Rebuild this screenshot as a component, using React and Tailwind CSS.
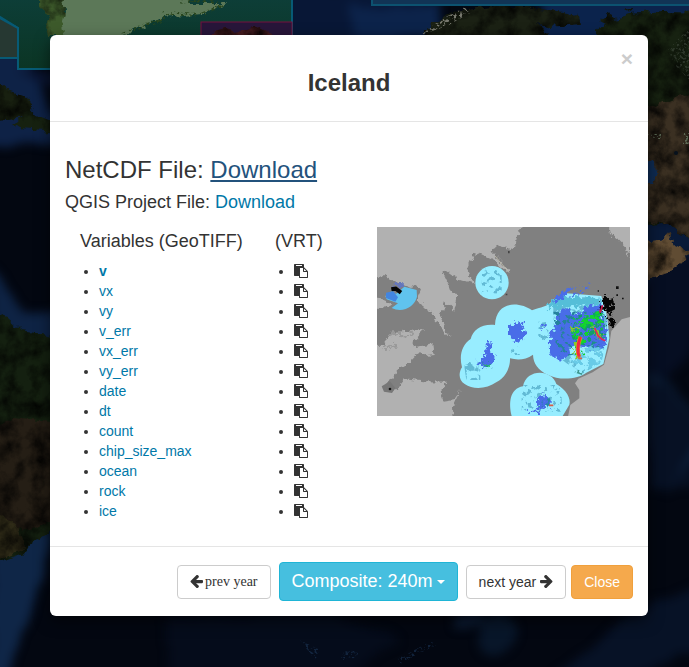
import React from "react";

const variables = [
  "v", "vx", "vy", "v_err", "vx_err", "vy_err", "date",
  "dt", "count", "chip_size_max", "ocean", "rock", "ice",
];

function PasteIcon() {
  return (
    <svg viewBox="0 0 1792 1792" className="size-3.5" fill="currentColor" aria-hidden="true">
      <path d="M768 1664h896v-640h-416q-40 0-68-28t-28-68v-416h-384v1152zm256-1440v-64q0-13-9.5-22.5t-22.5-9.5h-704q-13 0-22.5 9.5t-9.5 22.5v64q0 13 9.5 22.5t22.5 9.5h704q13 0 22.5-9.5t9.5-22.5zm256 672h299l-299-299v299zm512 128v672q0 40-28 68t-68 28h-960q-40 0-68-28t-28-68v-160h-544q-40 0-68-28t-28-68v-1344q0-40 28-68t68-28h1088q40 0 68 28t28 68v328q21 13 36 28l408 408q28 28 48 76t20 88z" />
    </svg>
  );
}

function ArrowIcon({ right }) {
  return (
    <svg viewBox="128 128 1536 1536" className={right ? "size-[13px] rotate-180" : "size-[13px]"} fill="currentColor" aria-hidden="true">
      <path d="M1664 896v128q0 53-32.5 90.5t-84.5 37.5h-704l293 294q38 36 38 90t-38 90l-75 76q-37 37-90 37-52 0-91-37l-651-652q-37-37-37-90 0-52 37-91l651-650q38-38 91-38 52 0 90 38l75 74q38 38 38 91t-38 91l-293 293h704q52 0 84.5 37.5t32.5 90.5z" transform="translate(0 -64)" />
    </svg>
  );
}

function WorldMap() {
  return (
    <svg
      className="absolute inset-0 h-full w-full"
      viewBox="0 0 689 667"
      preserveAspectRatio="xMidYMid slice"
      aria-hidden="true"
    >
      <defs>
        <filter id="coast" x="-5%" y="-5%" width="110%" height="110%" colorInterpolationFilters="sRGB">
          <feTurbulence type="fractalNoise" baseFrequency="0.12" numOctaves="3" seed="4" result="n" />
          <feDisplacementMap in="SourceGraphic" in2="n" scale="9" xChannelSelector="R" yChannelSelector="G" result="d" />
          <feTurbulence type="fractalNoise" baseFrequency="0.06" numOctaves="6" seed="9" />
          <feColorMatrix values="0 0 0 0 0  0 0 0 0 0  0 0 0 0 0  1.6 0 0 0 -0.55" />
          <feComposite in2="d" operator="in" result="shade" />
          <feMerge>
            <feMergeNode in="d" />
            <feMergeNode in="shade" />
          </feMerge>
        </filter>
        <filter id="depth" x="-10%" y="-10%" width="120%" height="120%" colorInterpolationFilters="sRGB">
          <feTurbulence type="fractalNoise" baseFrequency="0.03" numOctaves="3" seed="2" result="n" />
          <feDisplacementMap in="SourceGraphic" in2="n" scale="14" xChannelSelector="R" yChannelSelector="G" />
          <feGaussianBlur stdDeviation="5" />
        </filter>
        <filter id="snow" colorInterpolationFilters="sRGB">
          <feTurbulence type="fractalNoise" baseFrequency="0.35" numOctaves="3" seed="7" />
          <feColorMatrix values="0 0 0 0 0  0 0 0 0 0  0 0 0 0 0  7 0 0 0 -3.6" result="m" />
          <feComposite in="SourceGraphic" in2="m" operator="in" />
        </filter>
        <filter id="rough" colorInterpolationFilters="sRGB">
          <feTurbulence type="fractalNoise" baseFrequency="0.15" numOctaves="3" seed="5" result="n" />
          <feDisplacementMap in="SourceGraphic" in2="n" scale="9" xChannelSelector="R" yChannelSelector="G" />
        </filter>
      </defs>
      <rect width="689" height="667" fill="#030711" />

      <g filter="url(#depth)">
        <path d="M-20 50H25L42 92 65 130V140L0 145H-20Z" fill="#0e2246" />
        <path d="M18 70H60V86L35 82Z" fill="#0a1430" />
        <path d="M-10 268 5 280 22 310 35 316 65 312V345H-10Z" fill="#0e2344" />
        <path d="M285-10H430L395 50H285Z" fill="#081736" />
        <path d="M350 8 440 2V40H355Z" fill="#0c234a" />
        <path d="M540-10H700V50H540Z" fill="#0b234c" />
        <path d="M-10 530H55L40 585 8 680H-10Z" fill="#0f2647" />
        <path d="M635 220H700V275L670 300 635 280Z" fill="#091a38" />
        <path d="M645 265 700 250V330L670 380 640 370Z" fill="#060e22" />
        <path d="M645 370Q670 370 700 420V440Q680 405 645 390Z" fill="#0a192f" />
        <path d="M640 385 670 385 695 420V490L650 490Z" fill="#071124" />
        <path d="M665 500 700 435V455L678 478Z" fill="#0c203c" />
        <path d="M550 680 625 620 700 580V650L620 680Z" fill="#071226" />
        <path d="M165 620 320 610 400 640 350 675H170Z" fill="#050c1b" />
        <ellipse cx="497" cy="635" rx="18" ry="22" fill="#081629" />
        <ellipse cx="468" cy="622" rx="14" ry="8" fill="#0b1a31" />
      </g>
      <g fill="#193150" filter="url(#snow)" opacity=".65">
        <path d="M340 655 348 650 360 652 354 658 342 660Z" />
        <path d="M395 660 430 642 438 644 400 664Z" />
        <path d="M300 640 320 650 315 660Z" />
      </g>

      <g filter="url(#coast)">
        <path d="M-5 80 8 90 25 96 33 106 30 112 18 118-5 120Z" fill="#182010" />
        <path d="M14 124 29 108 35 115 52 122V136L45 130 20 128Z" fill="#162110" />
        <path d="M-8 313 8 318 22 331 60 337V527L47 533 30 544 25 553 0 562H-8Z" fill="#142010" />
        <path d="M-8 430 12 418 60 423V518L30 530-8 520Z" fill="#251e15" />
        <path d="M-8 510 20 528 25 550-8 562Z" fill="#302c18" />
        <path d="M418 42 430 24 460 10 500 5 535 8 578 16 580 24 550 27 537 23 550 36V42Z" fill="#1b2114" />
        <path d="M590 45 603 24 630 14 665 11 700 12V242L680 234 667 224 640 225V45Z" fill="#172211" />
        <path d="M600 20 608 14 616 18 608 24ZM624 10 632 8 630 13Z" fill="#1d2414" />
        <path d="M640 110 700 90V241L678 233 668 224 640 221Z" fill="#3b3022" />
        <path d="M640 243 663 239 669 232 675 244 690 251 682 262 670 272 648 280 635 280Z" fill="#604c33" />
      </g>
      <path d="M646 159 655 162 656 176 651 184 645 184Z" fill="#0e2b52" filter="url(#rough)" />
      <path d="M646 134h15v5h-15ZM684 133h5v11h-6Z" fill="#70866d" filter="url(#snow)" opacity=".7" />
      <circle cx="676" cy="153" r="2" fill="#07111d" />
      <path d="M421 35 440 20 465 7 470 13 447 26Z" fill="#77786e" filter="url(#snow)" />
      <path d="M668 50 689 28V80L676 66Z" fill="#545e53" filter="url(#snow)" opacity=".4" />

      <linearGradient id="north" x2="0" y2="1">
        <stop stopColor="#0d3e38" />
        <stop offset="1" stopColor="#0b3524" />
      </linearGradient>
      <path d="M-3 15 18 28V69H292V-3H-3Z" fill="url(#north)" stroke="#075a75" strokeWidth="2" />
      <path d="M-2 17 18 28V58H-2Z" fill="#263832" stroke="#075a75" strokeWidth="2" />
      <path d="M40-5H65L67 35H48L45 26 50 15 40 8Z" fill="#3d5a2b" filter="url(#coast)" />
      <path d="M60-8 65 12 62 24 66 45H116L132 31 162 18 202 14 226 4 190 4 180-8Z" fill="#5c7858" filter="url(#rough)" />
      <path d="M122 35 145 25 162 21 164 13 201 15 222 5 205 0 180 2" fill="none" stroke="#29461d" strokeWidth="4" filter="url(#snow)" />
      <rect x="201" y="22" width="91" height="50" fill="#28163a" stroke="#74123f" />
      <path d="M211 40 214 30 224 27 236 31 258 27 272 34V42Z" fill="#461c20" filter="url(#coast)" />
      <path d="M372-4V5H695V-4Z" fill="#113455" stroke="#0c5270" strokeWidth="2" />
    </svg>
  );
}

function VelocityPreview() {
  return (
    <svg
      viewBox="21 21 759 567"
      className="block h-auto w-full"
      role="img"
      aria-label="Ice velocity map of Iceland"
    >
      <defs>
        <filter id="shore" x="-5%" y="-5%" width="110%" height="110%" colorInterpolationFilters="sRGB">
          <feTurbulence type="fractalNoise" baseFrequency="0.055" numOctaves="3" seed="3" result="n" />
          <feDisplacementMap in="SourceGraphic" in2="n" scale="24" xChannelSelector="R" yChannelSelector="G" />
        </filter>
        <filter id="patch" x="-15%" y="-15%" width="130%" height="130%" colorInterpolationFilters="sRGB">
          <feTurbulence type="fractalNoise" baseFrequency="0.08" numOctaves="3" seed="8" result="n" />
          <feDisplacementMap in="SourceGraphic" in2="n" scale="36" xChannelSelector="R" yChannelSelector="G" />
        </filter>
        <filter id="speckle" x="0" y="0" width="100%" height="100%" colorInterpolationFilters="sRGB">
          <feTurbulence type="fractalNoise" baseFrequency="0.055" numOctaves="4" seed="12" />
          <feColorMatrix values="0 0 0 0 0  0 0 0 0 0  0 0 0 0 0  10 0 0 0 -4.8" result="m" />
          <feComposite in="SourceGraphic" in2="m" operator="in" />
        </filter>
        <filter id="sparse" x="0" y="0" width="100%" height="100%" colorInterpolationFilters="sRGB">
          <feTurbulence type="fractalNoise" baseFrequency="0.07" numOctaves="4" seed="21" />
          <feColorMatrix values="0 0 0 0 0  0 0 0 0 0  0 0 0 0 0  0 10 0 0 -5.5" result="m" />
          <feComposite in="SourceGraphic" in2="m" operator="in" />
        </filter>
      </defs>
      <rect x="21" y="21" width="759" height="567" fill="#808080" />
      <g fill="#b1b1b1" filter="url(#shore)">
        <path d="M0 0H475L443 30 438 70 423 90 375 76 365 95 418 150 414 160 370 118 328 98 309 107 292 150 315 195 270 180 230 152 219 163 239 205 262 234 253 272 225 245 211 290 240 352 207 317 186 277 160 260 140 236 153 208 112 196 80 190 50 167 0 175Z" />
        <path d="M0 375 40 374 69 335 165 330 128 365 128 382 190 373 194 402 158 406 145 400 116 430 83 450 65 480 42 490 76 512 104 478 165 484 232 485 210 515 221 545 249 541 270 510 246 560 248 610H0Z" />
        <path d="M715 0H810V60L777 85 780 115 768 85 748 65 720 45Z" />
        <path d="M0 235 40 238 70 252 56 265 0 256Z" />
      </g>
      <path d="M60 345 85 335 105 350 130 335M40 390 80 375" fill="none" stroke="#999" strokeWidth="8" filter="url(#patch)" />
      <path d="M800 285 755 298 724 333 717 380 702 434 668 457 625 476 615 490 628 510 628 535 601 555 592 600H800Z" fill="#b1b1b1" />
      <path d="M375 108 395 132 416 155" fill="none" stroke="#bbb8a8" strokeWidth="3" />

      <g fill="#98edff">
        <circle cx="366" cy="188" r="50" />
        <path d="M375 315C378 240 450 245 486 271 510 260 537 262 546 240L590 220 694 228 712 292 718 355 700 432 649 458C625 477 570 483 535 465 503 450 490 430 489 404 466 420 443 421 420 415 421 446 403 476 380 486 350 507 310 510 284 492 266 480 265 459 276 442 267 407 275 375 302 357 309 329 335 311 375 315Z" />
        <path d="M459 499C468 445 546 446 559 492 588 508 604 536 598 554L578 588H425C416 551 418 506 459 499Z" />
      </g>

      <path d="M46 228 66 213 78 222 103 200 140 210 141 230C134 260 98 280 65 264L84 250 50 238Z" fill="#60c3ee" />
      <path d="M78 200h64v66h-64Z" fill="#3b8ae5" filter="url(#speckle)" clipPath="circle(42px at 102px 230px)" />
      <path d="M48 218 70 214 84 232 76 245 48 234Z" fill="#4385df" />
      <path d="M72 190h30v15h-25Z" fill="#6576bc" filter="url(#patch)" />
      <path d="m64 208 13-2 16 12" fill="none" stroke="#050505" strokeWidth="12" />

      <g fill="#62bad5">
        <path d="M335 145h60v75h-60Z" filter="url(#sparse)" />
        <path d="M281 425h50v55h-42Z" filter="url(#speckle)" />
        <path d="M415 370h35v35h-35ZM505 305h30v55h-30Z" filter="url(#sparse)" />
        <path d="M455 495h120v80h-120Z" filter="url(#sparse)" />
        <path d="M550 235 694 230 712 295 710 350 695 425 640 460 590 430 550 400Z" filter="url(#speckle)" />
      </g>
      <path d="M544 239 582 230 692 234 687 250 620 258 536 265Z" fill="#55bed8" filter="url(#patch)" />
      <g fill="#496de8">
        <g filter="url(#patch)">
          <path d="M420 320 440 310 458 312 466 334 460 358 437 369 420 347Z" />
          <path d="M348 376 354 361 365 367 363 390 375 413 362 432 345 447 325 430 338 417 345 398Z" />
          <path d="M502 537 519 525 538 538 540 558 514 571 498 554ZM470 578l40-8v9h-40Z" />
          <path d="M559 277 595 265 608 285 638 282 647 258 690 252 700 292 710 324 707 368 681 397 654 389 624 370 600 383 594 410 568 423 539 397 541 336 558 325Z" />
          <path d="M548 245 565 218 588 214 576 239ZM511 309h10v14h-10Z" />
        </g>
        <path d="M573 210 660 185 665 200 625 230 575 236Z" filter="url(#sparse)" />
      </g>
      <path d="M550 275H700V385L560 415Z" fill="#24839c" filter="url(#sparse)" />
      <path d="M337 420h30v25h-30ZM505 535h35v25h-35Z" fill="#2587a6" filter="url(#sparse)" />
      <path d="M600 399 640 380 705 365 693 430 650 450 604 424Z" fill="#68cbe7" filter="url(#speckle)" />
      <path d="M620 288 660 275 695 275 710 350 660 379 612 370 602 340Z" fill="#119e69" filter="url(#speckle)" />
      <g fill="#14d52c">
        <path d="M612 285 640 282 705 270 706 328 670 330 650 360 645 406 615 405 603 330Z" filter="url(#sparse)" />
        <path d="M628 303 646 296 658 308 642 325ZM675 290 688 280 697 294 690 312ZM612 340 635 348 638 362 618 368Z" filter="url(#patch)" />
        <path d="M340 433h20v7h-20Z" filter="url(#patch)" opacity=".6" />
      </g>
      <g fill="none" filter="url(#patch)">
        <path d="M622 360Q610 390 623 414M601 331 628 323M668 320 695 355" stroke="#89cb27" strokeWidth="7" />
      </g>
      <path d="M632 350Q617 389 628 411" fill="none" stroke="#dca21c" strokeWidth="12" />
      <path d="M631 350Q618 389 628 411" fill="none" stroke="#f22645" strokeWidth="9" />
      <path d="m674 324 10 23 12 11 10 4M689 275l8-17" fill="none" stroke="#e82458" strokeWidth="5" />
      <path d="M627 409v6h9M537 556h13" stroke="#d65f48" strokeWidth="5" fill="none" />
      <path d="M612 457 640 442 636 465Z" fill="#3e9890" filter="url(#speckle)" />

      <g fill="#050505" filter="url(#patch)">
        <path d="M696 232 723 231 731 262 720 285 707 276 701 265 690 277 685 269 697 257ZM713 290h18v28h-12Z" />
      </g>
      <path d="M690 278 698 256" fill="none" stroke="#d51d4d" strokeWidth="5" />
      <path d="M738 199h8v8h-8ZM739 223h5v5h-5ZM683 211h4v4h-4ZM756 233h5v5h-5Z" fill="#111" />
      <path d="M407 221h5v5h-5ZM414 93h5v7h-5Z" fill="#444" />
      <path d="M35 499 60 484 76 504 66 519 42 515Z" fill="#777" />
      <circle cx="60" cy="507" r="4" fill="#151515" />
    </svg>
  );
}

export default function App() {
  return (
    <div className="relative min-h-screen overflow-hidden bg-[#030711] pt-[35px] pb-12 pl-[9px] font-['Liberation_Sans',Arial,sans-serif] text-sm leading-5 text-[#333]">
      <WorldMap />
      <main
        role="dialog"
        aria-labelledby="region-title"
        className="relative mx-auto max-w-[598px] rounded-md bg-white shadow-[0_5px_15px_rgba(0,0,0,0.5)]"
      >
        <header className="border-b border-[#e5e5e5] p-[15px]">
          <button type="button" aria-label="Dismiss" className="float-right -mt-0.5 text-[21px] leading-[21px] font-bold text-[#ccc]">
            ×
          </button>
          <h3 id="region-title" className="pt-5 pb-[10px] text-center text-2xl leading-[26px] font-bold">
            Iceland
          </h3>
        </header>

        <div className="p-[15px]">
          <h3 className="pt-5 text-2xl leading-[26px]">
            NetCDF File: <a href="#netcdf" className="text-[#23527c] underline">Download</a>
          </h3>
          <h4 className="pt-[9px] text-lg leading-5">
            QGIS Project File: <a href="#qgis" className="text-[#0078a8]">Download</a>
          </h4>

          <div className="flex pt-[15px] pr-[3px] pl-[15px]">
            <section className="grow pt-1">
              <h4 className="text-lg leading-5">Variables (GeoTIFF)</h4>
              <ul className="list-disc py-[10px] pl-[19px]">
                {variables.map((name) => (
                  <li key={name}>
                    <a href={`#${name}`} className={name === "v" ? "font-bold text-[#0078a8]" : "text-[#0078a8]"}>
                      {name}
                    </a>
                  </li>
                ))}
              </ul>
            </section>
            <section className="w-[102px] shrink-0 pt-1">
              <h4 className="text-lg leading-5">(VRT)</h4>
              <ul className="list-disc py-[10px] pl-[19px]">
                {variables.map((name) => (
                  <li key={name}>
                    <button type="button" aria-label={`Copy ${name} VRT link`} className="inline-flex h-5 items-center align-top">
                      <PasteIcon />
                    </button>
                  </li>
                ))}
              </ul>
            </section>
            <div className="w-[253px] shrink-0">
              <VelocityPreview />
            </div>
          </div>
        </div>

        <footer className="flex items-center justify-end border-t border-[#e5e5e5] p-[15px]">
          <button type="button" className="mr-2 flex items-center gap-0.5 rounded border border-[#ccc] bg-white px-3 py-1.5 font-['Liberation_Serif',serif]">
            <ArrowIcon />
            prev year
          </button>
          <button type="button" aria-haspopup="menu" className="mr-2 flex items-center gap-1 rounded border border-[#1fb5d6] bg-[#46bfdf] px-3 py-1.5 text-lg leading-[25px] text-white">
            Composite: 240m
            <span className="border-x-4 border-t-4 border-x-transparent border-t-white" />
          </button>
          <button type="button" className="mr-[5px] flex items-center gap-1 rounded border border-[#ccc] bg-white px-3 py-1.5">
            next year
            <ArrowIcon right />
          </button>
          <button type="button" className="rounded border border-[#f0a03c] bg-[#f5a94c] px-3 py-1.5 text-white">
            Close
          </button>
        </footer>
      </main>
    </div>
  );
}
